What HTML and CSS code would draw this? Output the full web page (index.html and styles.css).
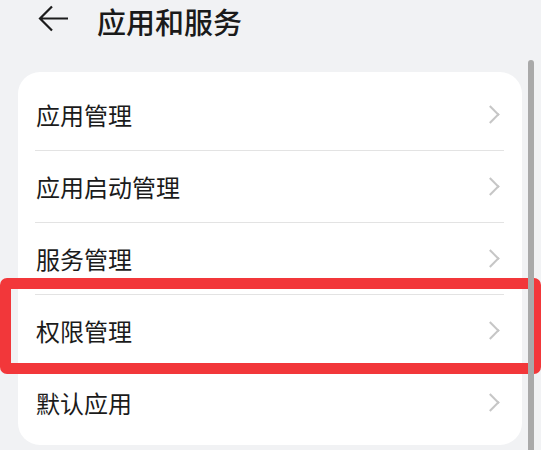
FILE: index.html
```html
<!DOCTYPE html>
<html lang="zh-CN">
<head>
    <meta charset="UTF-8">
    <meta name="viewport" content="width=device-width, initial-scale=1.0">
    <title>应用和服务</title>
    <link rel="stylesheet" href="styles.css">
</head>
<body>
    <div class="page">
        <header class="topbar">
            <svg class="back" width="32" height="30" viewBox="0 0 32 30">
                <path d="M30 13.5H2M14 1.5L2 13.5l12 12" fill="none" stroke="#1c1c1c" stroke-width="2.2"/>
            </svg>
            <h1>应用和服务</h1>
        </header>

        <ul class="menu">
            <li class="item"><span>应用管理</span><i class="chevron"></i></li>
            <li class="item"><span>应用启动管理</span><i class="chevron"></i></li>
            <li class="item"><span>服务管理</span><i class="chevron"></i></li>
            <li class="item"><span>权限管理</span><i class="chevron"></i></li>
            <li class="item"><span>默认应用</span><i class="chevron"></i></li>
        </ul>

        <!-- 标注框 -->
        <div class="highlight"></div>
        <div class="scrollbar"></div>
    </div>
</body>
</html>
```

FILE: styles.css
```css
* {
    margin: 0;
    padding: 0;
    box-sizing: border-box;
}

body {
    font-family: "Noto Sans CJK SC", "Noto Sans", sans-serif;
    background: #f1f2f4;
    color: #1b1b1b;
    overflow: hidden;
}

.page {
    position: relative;
    width: 541px;
    height: 450px;
}

.topbar {
    display: flex;
    align-items: center;
    height: 42px;
    padding-left: 38px;
}

.back {
    display: block;
    margin-top: -2px;
}

h1 {
    margin-left: 27px;
    font-size: 29px;
    font-weight: 500;
    line-height: 42px;
    color: #1a1a1a;
}

.menu {
    list-style: none;
    margin: 30px 0 0 18px;
    width: 504px;
    padding: 7px 0;
    background: #fff;
    border-radius: 22px;
}

.item {
    display: flex;
    align-items: center;
    justify-content: space-between;
    height: 72px;
    margin: 0 18px 0 17px;
    padding: 0 1px;
    border-bottom: 1px solid #e3e3e3;
    font-size: 24px;
}

.item:last-child {
    border-bottom: none;
    height: 71px;
}

.chevron {
    width: 13px;
    height: 13px;
    margin-right: 6px;
    border-top: 2px solid #c6c6c6;
    border-right: 2px solid #c6c6c6;
    transform: rotate(45deg);
}

.highlight {
    position: absolute;
    left: 0;
    top: 278px;
    width: 541px;
    height: 96px;
    border: 11px solid #f2373a;
    border-radius: 7px;
}

.scrollbar {
    position: absolute;
    left: 528px;
    top: 60px;
    width: 6px;
    height: 400px;
    background: #a9a9a9;
    border-radius: 3px;
}
```
